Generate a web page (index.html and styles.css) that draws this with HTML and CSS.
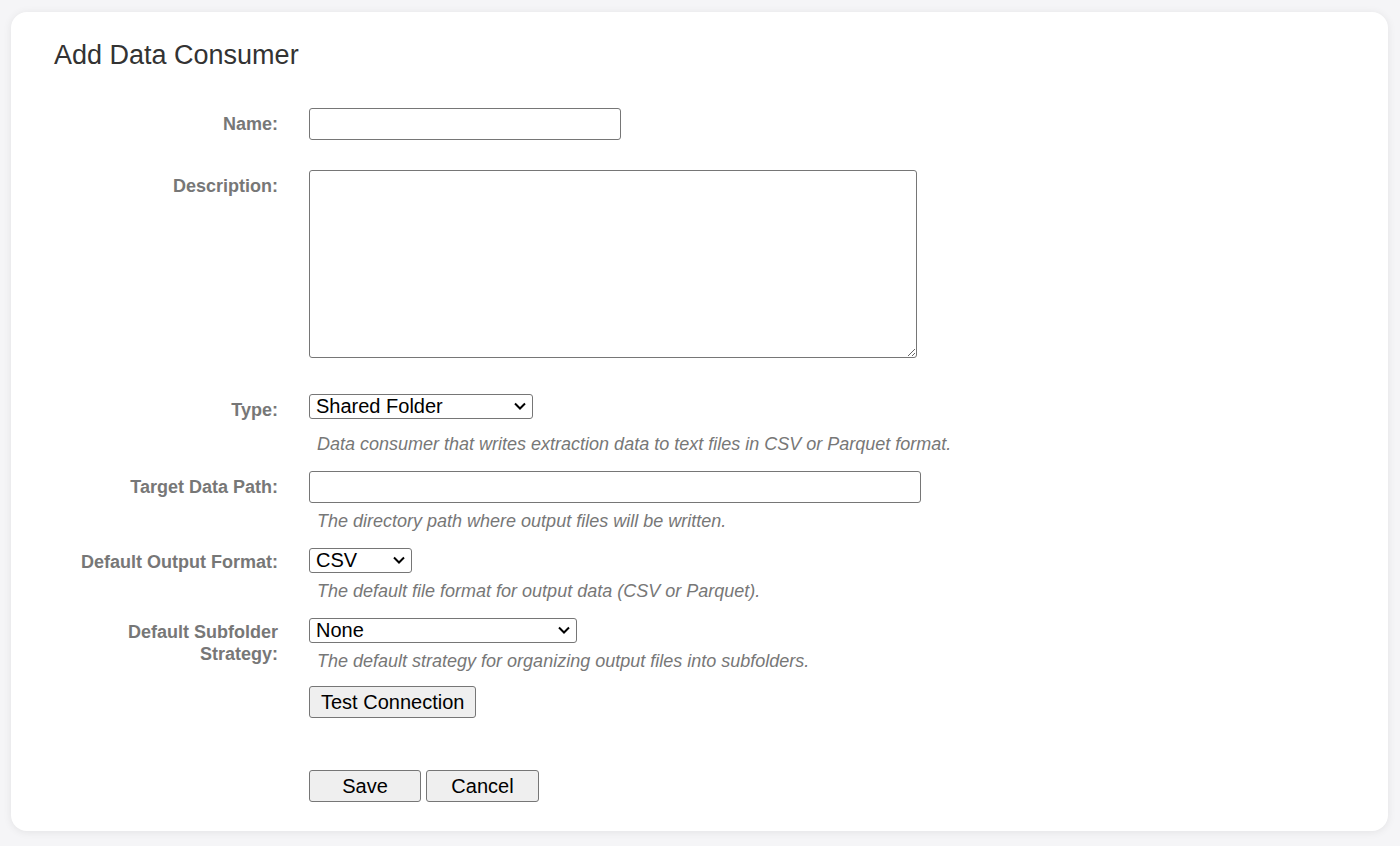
FILE: index.html
```html
<!DOCTYPE html>
<html lang="en">

<head>
    <meta charset="UTF-8">
    <meta name="viewport" content="width=device-width, initial-scale=1.0">
    <title>Add Data Consumer</title>
    <link rel="stylesheet" href="styles.css">
</head>

<body>
    <div class="card">
        <h1 class="title">Add Data Consumer</h1>

        <form class="form">
            <div class="row row-name">
                <label class="label" for="name">Name:</label>
                <div class="field">
                    <input type="text" id="name" class="input input-name">
                </div>
            </div>

            <div class="row row-desc">
                <label class="label" for="description">Description:</label>
                <div class="field">
                    <textarea id="description" class="textarea"></textarea>
                </div>
            </div>

            <div class="row">
                <label class="label" for="type">Type:</label>
                <div class="field">
                    <span class="select-wrap">
                        <select id="type" class="select select-type">
                            <option>Shared Folder</option>
                        </select>
                        <svg class="chevron" width="12" height="8" viewBox="0 0 12 8"><path d="M1 1.5 L6 6.5 L11 1.5" fill="none" stroke="#000" stroke-width="2"/></svg>
                    </span>
                    <div class="help help-type">Data consumer that writes extraction data to text files in CSV or Parquet format.</div>
                </div>
            </div>

            <div class="row">
                <label class="label" for="path">Target Data Path:</label>
                <div class="field">
                    <input type="text" id="path" class="input input-path">
                    <div class="help">The directory path where output files will be written.</div>
                </div>
            </div>

            <div class="row">
                <label class="label label-select" for="format">Default Output Format:</label>
                <div class="field">
                    <span class="select-wrap">
                        <select id="format" class="select select-format">
                            <option>CSV</option>
                            <option>Parquet</option>
                        </select>
                        <svg class="chevron" width="12" height="8" viewBox="0 0 12 8"><path d="M1 1.5 L6 6.5 L11 1.5" fill="none" stroke="#000" stroke-width="2"/></svg>
                    </span>
                    <div class="help">The default file format for output data (CSV or Parquet).</div>
                </div>
            </div>

            <div class="row row-sub">
                <label class="label label-select" for="subfolder">Default Subfolder Strategy:</label>
                <div class="field">
                    <span class="select-wrap">
                        <select id="subfolder" class="select select-sub">
                            <option>None</option>
                        </select>
                        <svg class="chevron" width="12" height="8" viewBox="0 0 12 8"><path d="M1 1.5 L6 6.5 L11 1.5" fill="none" stroke="#000" stroke-width="2"/></svg>
                    </span>
                    <div class="help">The default strategy for organizing output files into subfolders.</div>
                </div>
            </div>

            <div class="row row-test">
                <div></div>
                <div class="field">
                    <button type="button" class="btn">Test Connection</button>
                </div>
            </div>

            <div class="row row-actions">
                <div></div>
                <div class="field actions">
                    <button type="button" class="btn btn-save">Save</button>
                    <button type="button" class="btn btn-cancel">Cancel</button>
                </div>
            </div>
        </form>
    </div>
</body>

</html>
```

FILE: styles.css
```css
html,
body {
    margin: 0;
    background: #f5f5f7;
    font-family: "Liberation Sans", Arial, sans-serif;
}

body {
    padding: 12px 12px 15px 11px;
}

.card {
    background: #fff;
    border-radius: 16px;
    box-shadow: 0 1px 8px rgba(0, 0, 0, 0.08);
    padding: 28px 43px 29px 43px;
}

.title {
    margin: 0 0 37px 0;
    font-size: 27px;
    line-height: 31px;
    font-weight: normal;
    color: #333;
}

.row {
    display: grid;
    grid-template-columns: 224px 1fr;
    column-gap: 31px;
    margin-bottom: 17px;
}

.row-name {
    margin-bottom: 30px;
}

.row-desc {
    margin-bottom: 36px;
}

.row-sub {
    margin-bottom: 15px;
}

.row-test {
    margin-bottom: 52px;
}

.row-actions {
    margin-bottom: 0;
}

.label {
    text-align: right;
    font-size: 18px;
    line-height: 22px;
    font-weight: bold;
    color: #777;
    padding-top: 5px;
}

.label-select {
    padding-top: 3px;
}

.field {
    display: flex;
    flex-direction: column;
    align-items: flex-start;
}

.input,
.textarea {
    box-sizing: border-box;
    border: 1px solid #767676;
    border-radius: 3px;
    font-family: inherit;
    font-size: 16px;
    padding: 4px 6px;
    margin: 0;
    background: #fff;
}

.input {
    height: 32px;
}

.input-name {
    width: 312px;
}

.input-path {
    width: 612px;
}

.textarea {
    display: block;
    width: 608px;
    height: 188px;
}

.select-wrap {
    position: relative;
    display: block;
    height: 25px;
}

.select {
    display: block;
    box-sizing: border-box;
    height: 25px;
    font-family: inherit;
    font-size: 20px;
    line-height: 23px;
    border: 1px solid #767676;
    border-radius: 3px;
    background: #fff;
    color: #000;
    padding: 0 6px;
    margin: 0;
    appearance: none;
    -webkit-appearance: none;
}

.chevron {
    position: absolute;
    right: 7px;
    top: 8px;
    pointer-events: none;
}

.select-type {
    width: 224px;
}

.select-format {
    width: 103px;
}

.select-sub {
    width: 268px;
}

.help {
    font-size: 18px;
    line-height: 20px;
    font-style: italic;
    color: #777;
    padding-left: 8px;
    margin-top: 8px;
}

.help-type {
    margin-top: 15px;
}

.btn {
    box-sizing: border-box;
    height: 32px;
    font-family: inherit;
    font-size: 20px;
    line-height: 22px;
    padding: 4px 11px;
    background: #efefef;
    border: 1px solid #767676;
    border-radius: 3px;
    color: #000;
}

.actions {
    flex-direction: row;
    gap: 5px;
}

.btn-save {
    width: 112px;
}

.btn-cancel {
    width: 113px;
}
```
